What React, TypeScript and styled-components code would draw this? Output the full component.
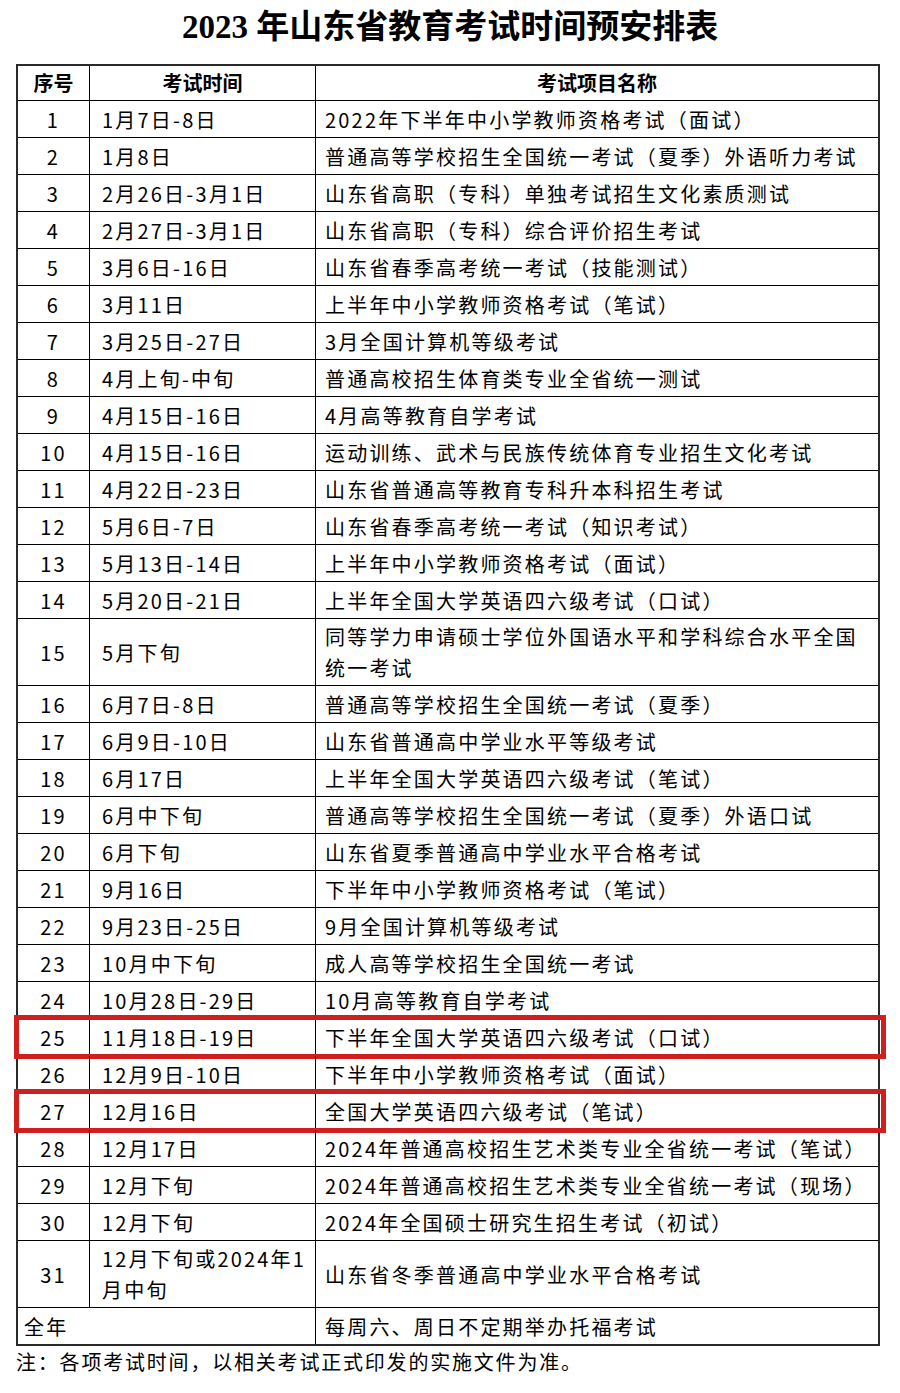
import styled, { createGlobalStyle } from "styled-components";

const GlobalStyle = createGlobalStyle`
  body {
    margin: 0;
    background: #fff;
    color: #000;
    font-family: "Noto Sans CJK SC", sans-serif;
  }
`;

type Exam = {
  no: string;
  time: string;
  name: string;
  marked?: boolean;
};

const exams: Exam[] = [
  { no: "1", time: "1月7日-8日", name: "2022年下半年中小学教师资格考试（面试）" },
  { no: "2", time: "1月8日", name: "普通高等学校招生全国统一考试（夏季）外语听力考试" },
  { no: "3", time: "2月26日-3月1日", name: "山东省高职（专科）单独考试招生文化素质测试" },
  { no: "4", time: "2月27日-3月1日", name: "山东省高职（专科）综合评价招生考试" },
  { no: "5", time: "3月6日-16日", name: "山东省春季高考统一考试（技能测试）" },
  { no: "6", time: "3月11日", name: "上半年中小学教师资格考试（笔试）" },
  { no: "7", time: "3月25日-27日", name: "3月全国计算机等级考试" },
  { no: "8", time: "4月上旬-中旬", name: "普通高校招生体育类专业全省统一测试" },
  { no: "9", time: "4月15日-16日", name: "4月高等教育自学考试" },
  { no: "10", time: "4月15日-16日", name: "运动训练、武术与民族传统体育专业招生文化考试" },
  { no: "11", time: "4月22日-23日", name: "山东省普通高等教育专科升本科招生考试" },
  { no: "12", time: "5月6日-7日", name: "山东省春季高考统一考试（知识考试）" },
  { no: "13", time: "5月13日-14日", name: "上半年中小学教师资格考试（面试）" },
  { no: "14", time: "5月20日-21日", name: "上半年全国大学英语四六级考试（口试）" },
  { no: "15", time: "5月下旬", name: "同等学力申请硕士学位外国语水平和学科综合水平全国统一考试" },
  { no: "16", time: "6月7日-8日", name: "普通高等学校招生全国统一考试（夏季）" },
  { no: "17", time: "6月9日-10日", name: "山东省普通高中学业水平等级考试" },
  { no: "18", time: "6月17日", name: "上半年全国大学英语四六级考试（笔试）" },
  { no: "19", time: "6月中下旬", name: "普通高等学校招生全国统一考试（夏季）外语口试" },
  { no: "20", time: "6月下旬", name: "山东省夏季普通高中学业水平合格考试" },
  { no: "21", time: "9月16日", name: "下半年中小学教师资格考试（笔试）" },
  { no: "22", time: "9月23日-25日", name: "9月全国计算机等级考试" },
  { no: "23", time: "10月中下旬", name: "成人高等学校招生全国统一考试" },
  { no: "24", time: "10月28日-29日", name: "10月高等教育自学考试" },
  { no: "25", time: "11月18日-19日", name: "下半年全国大学英语四六级考试（口试）", marked: true },
  { no: "26", time: "12月9日-10日", name: "下半年中小学教师资格考试（面试）" },
  { no: "27", time: "12月16日", name: "全国大学英语四六级考试（笔试）", marked: true },
  { no: "28", time: "12月17日", name: "2024年普通高校招生艺术类专业全省统一考试（笔试）" },
  { no: "29", time: "12月下旬", name: "2024年普通高校招生艺术类专业全省统一考试（现场）" },
  { no: "30", time: "12月下旬", name: "2024年全国硕士研究生招生考试（初试）" },
  { no: "31", time: "12月下旬或2024年1月中旬", name: "山东省冬季普通高中学业水平合格考试" },
];

const App = () => {
  return (
    <Page>
      <GlobalStyle />
      <Title>2023 年山东省教育考试时间预安排表</Title>
      <Table>
        <Row>
          <HeadCell>序号</HeadCell>
          <HeadCell>考试时间</HeadCell>
          <HeadCell>考试项目名称</HeadCell>
        </Row>
        {exams.map((e) => (
          <Row key={e.no} $marked={e.marked}>
            <Cell $center>{e.no}</Cell>
            <Cell $pad={12}>{e.time}</Cell>
            <Cell>{e.name}</Cell>
          </Row>
        ))}
        <Row $last>
          <Cell $span={2} $pad={6}>全年</Cell>
          <Cell>每周六、周日不定期举办托福考试</Cell>
        </Row>
      </Table>
      <Note>注：各项考试时间，以相关考试正式印发的实施文件为准。</Note>
    </Page>
  );
};

const Page = styled.div`
  width: 900px;
  padding-bottom: 20px;
`;

const Title = styled.h1`
  margin: 0;
  padding: 6px 0 16px;
  text-align: center;
  font-family: "Liberation Serif", "Noto Sans CJK SC", serif;
  font-size: 33px;
  font-weight: 700;
  line-height: 42px;
`;

const Table = styled.div`
  width: 864px;
  margin-left: 16px;
  box-sizing: border-box;
  border: 2px solid #2a2a2a;
`;

const Row = styled.div<{ $marked?: boolean; $last?: boolean }>`
  position: relative;
  display: grid;
  grid-template-columns: 72px 226px 1fr;
  border-bottom: ${(p) => (p.$last ? "none" : "1px solid #000")};

  ${(p) =>
    p.$marked &&
    `
    &::after {
      content: "";
      position: absolute;
      top: -4px;
      bottom: -4px;
      left: -4px;
      right: -8px;
      border: 5px solid #d01f1f;
      pointer-events: none;
    }
  `}
`;

const Cell = styled.div<{ $center?: boolean; $pad?: number; $span?: number }>`
  display: flex;
  align-items: center;
  justify-content: ${(p) => (p.$center ? "center" : "flex-start")};
  grid-column: ${(p) => (p.$span ? `span ${p.$span}` : "auto")};
  min-height: 32px;
  padding: 2px 4px 2px ${(p) => (p.$center ? 4 : p.$pad ?? 9)}px;
  border-right: 1px solid #000;
  font-size: 20px;
  line-height: 31px;
  letter-spacing: 2.2px;

  &:last-child {
    border-right: none;
    padding-right: 10px;
  }
`;

const HeadCell = styled.div`
  display: flex;
  align-items: center;
  justify-content: center;
  min-height: 30px;
  padding: 2px 4px;
  border-right: 1px solid #000;
  font-size: 20px;
  font-weight: 700;
  line-height: 30px;

  &:last-child {
    border-right: none;
  }
`;

const Note = styled.div`
  padding-left: 16px;
  margin-top: 1px;
  font-size: 20px;
  line-height: 30px;
  letter-spacing: 1.8px;
`;

export default App;
